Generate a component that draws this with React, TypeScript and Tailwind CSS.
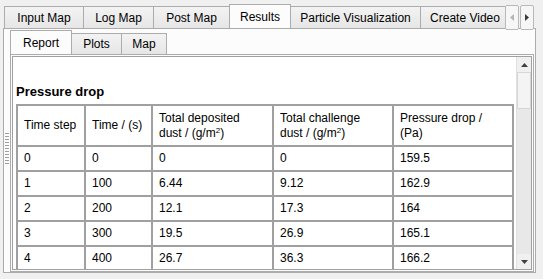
import React from "react";

const topTabs = [
  { label: "Input Map", w: 80 },
  { label: "Log Map", w: 71 },
  { label: "Post Map", w: 77 },
  { label: "Results", w: 62, active: true },
  { label: "Particle Visualization", w: 131 },
  { label: "Create Video", w: 90 },
];

const subTabs = [
  { label: "Report", w: 62, active: true },
  { label: "Plots", w: 51 },
  { label: "Map", w: 46 },
];

const rows = [
  ["0", "0", "0", "0", "159.5"],
  ["1", "100", "6.44", "9.12", "162.9"],
  ["2", "200", "12.1", "17.3", "164"],
  ["3", "300", "19.5", "26.9", "165.1"],
  ["4", "400", "26.7", "36.3", "166.2"],
];

function Tab({ label, w, active, small }: { label: string; w: number; active?: boolean; small?: boolean }) {
  return (
    <div
      style={{ width: w }}
      className={`-ml-px flex shrink-0 items-center justify-center border border-b-0 border-[#acacac] first:ml-0 ${
        active
          ? `z-10 bg-[#fcfcfc] ${small ? "h-[24px]" : "h-[25px] -mb-px"}`
          : `bg-linear-to-b from-[#f3f3f3] to-[#e6e6e6] ${small ? "h-[21px]" : "h-[22px]"}`
      }`}
    >
      <span className="whitespace-nowrap">{label}</span>
    </div>
  );
}

function Arrow({ dir }: { dir: "l" | "r" }) {
  return (
    <div className="flex h-[25px] w-[14px] items-center justify-center rounded-[2px] border border-[#b9b9b9] bg-[#f6f6f6]">
      <svg width="4" height="7" viewBox="0 0 4 7">
        {dir === "l" ? <path d="M4 0 L0 3.5 L4 7Z" fill="#b5b5b5" /> : <path d="M0 0 L4 3.5 L0 7Z" fill="#3c3c3c" />}
      </svg>
    </div>
  );
}

const cell = "border-2 border-[#a0a0a0] px-[6px] text-left align-middle font-normal";

export default function App() {
  return (
    <div className="relative h-[279px] w-[543px] overflow-hidden bg-[#f0f0f0] font-['Liberation_Sans',Arial,sans-serif] text-[12px] text-black">
      {/* top tab bar */}
      <div className="flex h-[28px] items-end pl-[4px]">
        <div className="flex w-[501px] items-end overflow-hidden">
          {topTabs.map((t) => (
            <Tab key={t.label} {...t} />
          ))}
        </div>
        <div className="mb-[-1px] flex h-[28px] items-start gap-[1px] pt-[4px]">
          <Arrow dir="l" />
          <Arrow dir="r" />
        </div>
      </div>

      {/* outer pane */}
      <div className="ml-[3px] flex h-[245px] w-[533px] overflow-hidden border border-[#acacac] bg-[#fcfcfc]">
        <div className="flex w-[6px] flex-col items-center justify-center gap-[2px] pb-[4px]">
          {Array.from({ length: 11 }).map((_, i) => (
            <div key={i} className="h-px w-[4px] bg-[#9d9d9d]" />
          ))}
        </div>
        <div className="flex min-h-0 flex-1 flex-col pt-px pr-px">
          <div className="flex h-[24px] shrink-0 items-end">
            {subTabs.map((t) => (
              <Tab key={t.label} {...t} small />
            ))}
          </div>
          <div className="flex min-h-0 flex-1 border border-[#acacac] bg-[#fcfcfc] p-px">
            {/* text browser */}
            <div className="flex min-h-0 flex-1 overflow-hidden border border-[#a0a0a0] bg-white">
              <div className="min-h-0 flex-1 overflow-hidden pl-[3px] pt-[27px]">
                <div className="mb-[4px] text-[13px] font-bold leading-[16px]">Pressure drop</div>
                <table className="w-[496px] table-fixed border-collapse border-2 border-[#a0a0a0] leading-[15px]">
                  <colgroup>
                    <col className="w-[68px]" />
                    <col className="w-[67px]" />
                    <col className="w-[121px]" />
                    <col className="w-[120px]" />
                    <col className="w-[120px]" />
                  </colgroup>
                  <thead>
                    <tr className="h-[41px]">
                      <th className={cell}>Time step</th>
                      <th className={cell}>Time / (s)</th>
                      <th className={cell}>
                        Total deposited
                        <br />
                        dust / (g/m<sup className="text-[8px]">2</sup>)
                      </th>
                      <th className={cell}>
                        Total challenge
                        <br />
                        dust / (g/m<sup className="text-[8px]">2</sup>)
                      </th>
                      <th className={cell}>
                        Pressure drop /
                        <br />
                        (Pa)
                      </th>
                    </tr>
                  </thead>
                  <tbody>
                    {rows.map((r) => (
                      <tr key={r[0]} className="h-[25px]">
                        {r.map((c, i) => (
                          <td key={i} className="border-2 border-[#a0a0a0] px-[6px] py-0 align-middle">
                            {c}
                          </td>
                        ))}
                      </tr>
                    ))}
                  </tbody>
                </table>
              </div>
              {/* scrollbar */}
              <div className="flex w-[15px] shrink-0 flex-col border-l border-[#e0e0e0] bg-[#e8e8e8]">
                <div className="flex h-[15px] items-center justify-center bg-[#f0f0f0]">
                  <svg width="7" height="4" viewBox="0 0 7 4">
                    <path d="M0 4 L3.5 0 L7 4Z" fill="#404040" />
                  </svg>
                </div>
                <div className="h-[37px] border border-[#d6d6d6] bg-[#f4f4f4]" />
                <div className="flex-1" />
                <div className="flex h-[15px] items-center justify-center bg-[#f0f0f0]">
                  <svg width="7" height="4" viewBox="0 0 7 4">
                    <path d="M0 0 L3.5 4 L7 0Z" fill="#404040" />
                  </svg>
                </div>
              </div>
            </div>
          </div>
        </div>
      </div>
    </div>
  );
}
